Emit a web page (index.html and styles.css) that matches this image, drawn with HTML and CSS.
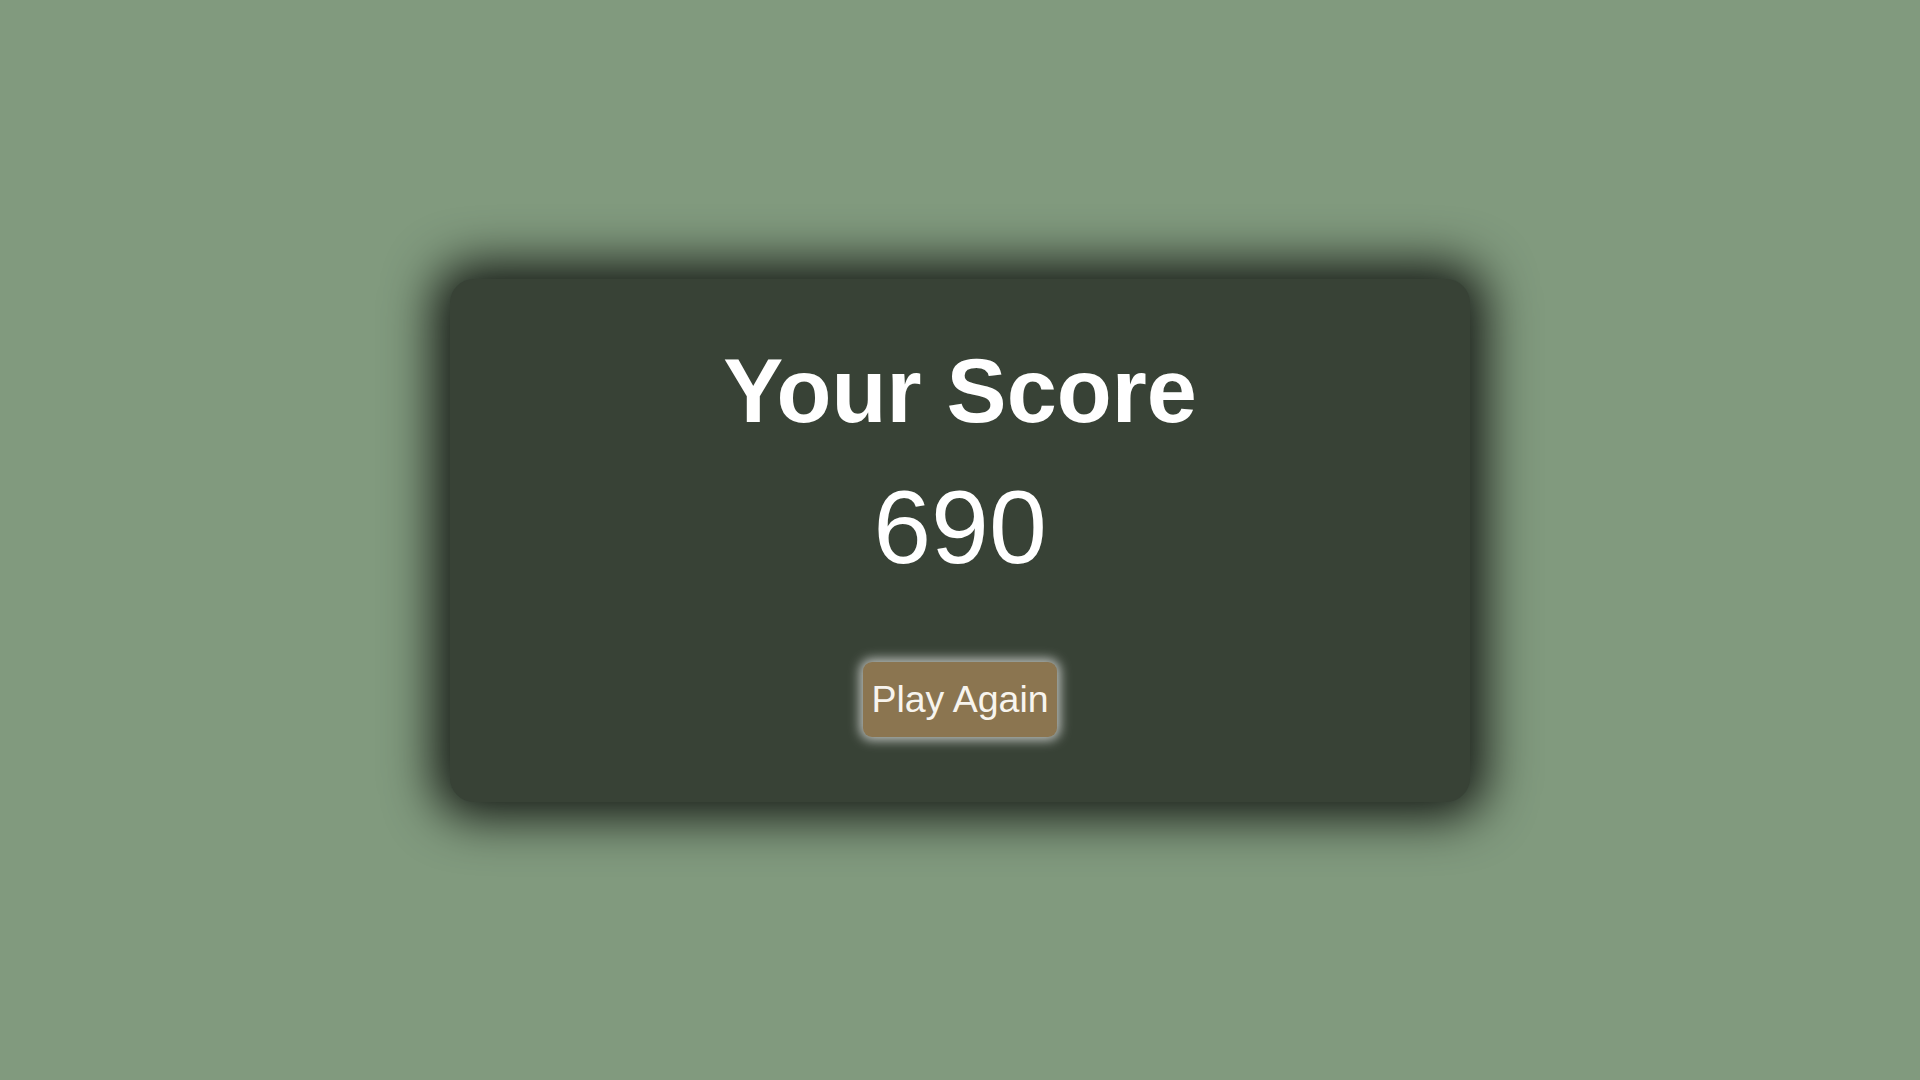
FILE: index.html
```html
<!DOCTYPE html>
<html lang="en">
<head>
<meta charset="utf-8">
<title>Your Score</title>
<link rel="stylesheet" href="styles.css">
</head>
<body>
<main class="stage">
  <section class="card">
    <h1 class="title">Your Score</h1>
    <div class="score">690</div>
    <button class="again" type="button">Play Again</button>
  </section>
</main>
</body>
</html>
```
FILE: styles.css
```css
html, body {
  margin: 0;
  padding: 0;
  height: 100%;
}
body {
  background: #819a7e;
  font-family: "Liberation Sans", Arial, sans-serif;
  color: #ffffff;
}
.stage {
  height: 100%;
  display: flex;
  align-items: center;
  justify-content: center;
}
.card {
  width: 1020px;
  height: 523px;
  box-sizing: border-box;
  padding: 61px 0 0;
  background: #384236;
  border-radius: 24px;
  box-shadow: 0 0 50px 15px rgba(0, 0, 0, 0.85);
  display: flex;
  flex-direction: column;
  align-items: center;
}
.title {
  margin: 0;
  font-size: 90px;
  font-weight: bold;
  line-height: normal;
}
.score {
  margin-top: 25px;
  font-size: 104px;
  line-height: normal;
}
.again {
  margin-top: 75px;
  width: 194px;
  height: 75px;
  font-family: "Liberation Sans", Arial, sans-serif;
  font-size: 37.5px;
  line-height: normal;
  color: #f7f4ee;
  background: #8b7550;
  border: 0;
  border-radius: 9px;
  padding: 0;
  box-shadow: 0 0 12px 3px rgba(255, 255, 255, 0.7);
}
```
